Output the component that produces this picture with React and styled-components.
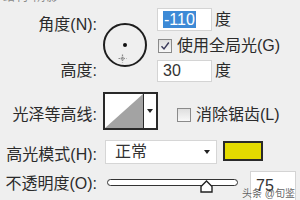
import React from "react";
import styled, { createGlobalStyle } from "styled-components";

const Global = createGlobalStyle`
  html, body { margin: 0; padding: 0; background: #efefef; }
  body { font-family: "Liberation Sans", "Noto Sans CJK SC", sans-serif; color: #2b2b2b; }
`;

const Panel = styled.div`
  position: relative;
  width: 300px;
  height: 200px;
  overflow: hidden;
  background: #efefef;
  font-size: 16px;
  line-height: 20px;
`;

const Clipped = styled.div`
  height: 4px;
  overflow: hidden;
  padding-left: 3px;
  color: #8a8a8a;
  font-size: 12px;
  line-height: 14px;
`;

const ClippedText = styled.div`
  margin-top: -10px;
  letter-spacing: 1px;
`;

const Row = styled.div`
  display: flex;
  align-items: flex-start;
  margin-top: ${(p) => p.$mt || 0}px;
`;

const LabelCol = styled.div`
  width: 97px;
  flex: none;
  display: flex;
  flex-direction: column;
  align-items: flex-end;
`;

const Label = styled.div`
  white-space: nowrap;
  margin-top: ${(p) => p.$mt || 0}px;
`;

const Dial = styled.div`
  position: relative;
  flex: none;
  box-sizing: border-box;
  width: 44px;
  height: 44px;
  border: 2px solid #1e1e1e;
  border-radius: 50%;
  margin: 19px 0 0 6px;
`;

const Dot = styled.div`
  position: absolute;
  left: 50%;
  top: 50%;
  width: 4px;
  height: 4px;
  margin: -2px 0 0 -2px;
  background: #111;
  border-radius: 50%;
`;

const Cross = styled.svg`
  position: absolute;
  left: 13px;
  top: 29px;
`;

const Col = styled.div`
  display: flex;
  flex-direction: column;
  margin-left: ${(p) => p.$ml || 0}px;
  margin-top: ${(p) => p.$mt || 0}px;
`;

const FieldRow = styled.div`
  display: flex;
  align-items: center;
  gap: 3px;
  margin-top: ${(p) => p.$mt || 0}px;
`;

const Field = styled.div`
  box-sizing: border-box;
  flex: none;
  width: ${(p) => p.$w}px;
  height: ${(p) => p.$h}px;
  margin-left: ${(p) => p.$ml || 0}px;
  background: #fff;
  border: 1px solid #d4d4d4;
  padding-left: 5px;
  display: flex;
  align-items: center;
  color: #333;
`;

const Selected = styled.span`
  background: #3d8ad6;
  color: #fff;
  line-height: 17px;
  padding: 0 1px;
`;

const CheckRow = styled.div`
  display: flex;
  align-items: center;
  gap: 5px;
  height: ${(p) => p.$h || 20}px;
  margin-left: ${(p) => p.$ml || 0}px;
  margin-top: ${(p) => p.$mt || 0}px;
  white-space: nowrap;
`;

const Box = styled.span`
  box-sizing: border-box;
  flex: none;
  width: 14px;
  height: 14px;
  margin-left: 1px;
  border: 1px solid #8a8a8a;
  background: linear-gradient(#dedede, #f8f8f8);
  display: inline-flex;
  align-items: center;
  justify-content: center;
`;

const Contour = styled.div`
  flex: none;
  display: flex;
  box-sizing: border-box;
  width: 55px;
  height: 38px;
  border: 2px solid #2a2a2a;
  background: #fff;
  margin-left: 6px;
`;

const ContourGraph = styled.svg`
  flex: none;
  display: block;
  border-right: 1.5px solid #2a2a2a;
`;

const ArrowCell = styled.div`
  flex: 1;
  display: flex;
  align-items: center;
  justify-content: center;
`;

const Caret = styled.span`
  width: 0;
  height: 0;
  border-left: 3.5px solid transparent;
  border-right: 3.5px solid transparent;
  border-top: 4px solid #222;
`;

const Select = styled.div`
  box-sizing: border-box;
  flex: none;
  width: 112px;
  height: 24px;
  margin-left: 8px;
  padding: 0 6px 0 9px;
  background: #fff;
  border: 1px solid #d6d6d6;
  display: flex;
  align-items: center;
  justify-content: space-between;
  color: #333;
`;

const Swatch = styled.div`
  flex: none;
  box-sizing: border-box;
  width: 40px;
  height: 20px;
  margin: 1px 0 0 6px;
  border: 2px solid #2a2a2a;
  background: #e4db00;
`;

const Track = styled.div`
  position: relative;
  flex: none;
  box-sizing: border-box;
  width: 131px;
  height: 7px;
  margin: 8px 0 0 10px;
  border: 1.5px solid #333;
  border-radius: 4px;
  background: #fff;
`;

const Thumb = styled.svg`
  position: absolute;
  left: 92px;
  top: 0px;
`;

const Watermark = styled.div`
  position: absolute;
  right: 5px;
  bottom: 0px;
  font-size: 10px;
  line-height: 12px;
  color: rgba(70, 70, 70, 0.85);
  white-space: nowrap;
`;

export default function App() {
  return (
    <>
      <Global />
      <Panel>
        <Clipped>
          <ClippedText>结构 阴影</ClippedText>
        </Clipped>

        <Row>
          <LabelCol>
            <Label $mt={11}>角度(N):</Label>
            <Label $mt={26}>高度:</Label>
          </LabelCol>
          <Dial>
            <Dot />
            <Cross width="9" height="9" viewBox="0 0 9 9">
              <path d="M4.5 0.5v8M0.5 4.5h8" stroke="#8a8a8a" strokeWidth="1.2" strokeDasharray="1.5 1" />
              <circle cx="4.5" cy="4.5" r="1.6" fill="none" stroke="#9a9a9a" strokeWidth="0.8" />
            </Cross>
          </Dial>
          <Col $ml={10} $mt={4}>
            <FieldRow>
              <Field $w={55} $h={23}>
                <Selected>-110</Selected>
              </Field>
              <span>度</span>
            </FieldRow>
            <CheckRow $mt={7} $h={16}>
              <Box>
                <svg width="10" height="10" viewBox="0 0 10 10">
                  <path d="M1.5 5.2 L4 8 L8.8 1.5" fill="none" stroke="#3a3a5a" strokeWidth="1.4" />
                </svg>
              </Box>
              <span>使用全局光(G)</span>
            </CheckRow>
            <FieldRow $mt={6}>
              <Field $w={55} $h={22}>30</Field>
              <span>度</span>
            </FieldRow>
          </Col>
        </Row>

        <Row $mt={10}>
          <LabelCol>
            <Label $mt={13}>光泽等高线:</Label>
          </LabelCol>
          <Contour>
            <ContourGraph width="38" height="34" viewBox="0 0 38 34">
              <polygon points="0,34 38,0 38,34" fill="#a3a3a3" />
            </ContourGraph>
            <ArrowCell>
              <Caret />
            </ArrowCell>
          </Contour>
          <CheckRow $ml={18} $mt={13}>
            <Box />
            <span>消除锯齿(L)</span>
          </CheckRow>
        </Row>

        <Row $mt={10}>
          <LabelCol>
            <Label $mt={5}>高光模式(H):</Label>
          </LabelCol>
          <Select>
            <span>正常</span>
            <Caret />
          </Select>
          <Swatch />
        </Row>

        <Row $mt={6}>
          <LabelCol>
            <Label $mt={3}>不透明度(O):</Label>
          </LabelCol>
          <Track>
            <Thumb width="13" height="13" viewBox="0 0 13 13">
              <path d="M6.5 1 L12 6.5 V12 H1 V6.5 Z" fill="#fff" stroke="#222" strokeWidth="1.4" />
            </Thumb>
          </Track>
          <Field $w={46} $h={30} $ml={12}>75</Field>
        </Row>

        <Watermark>头条 @旬鉴</Watermark>
      </Panel>
    </>
  );
}
